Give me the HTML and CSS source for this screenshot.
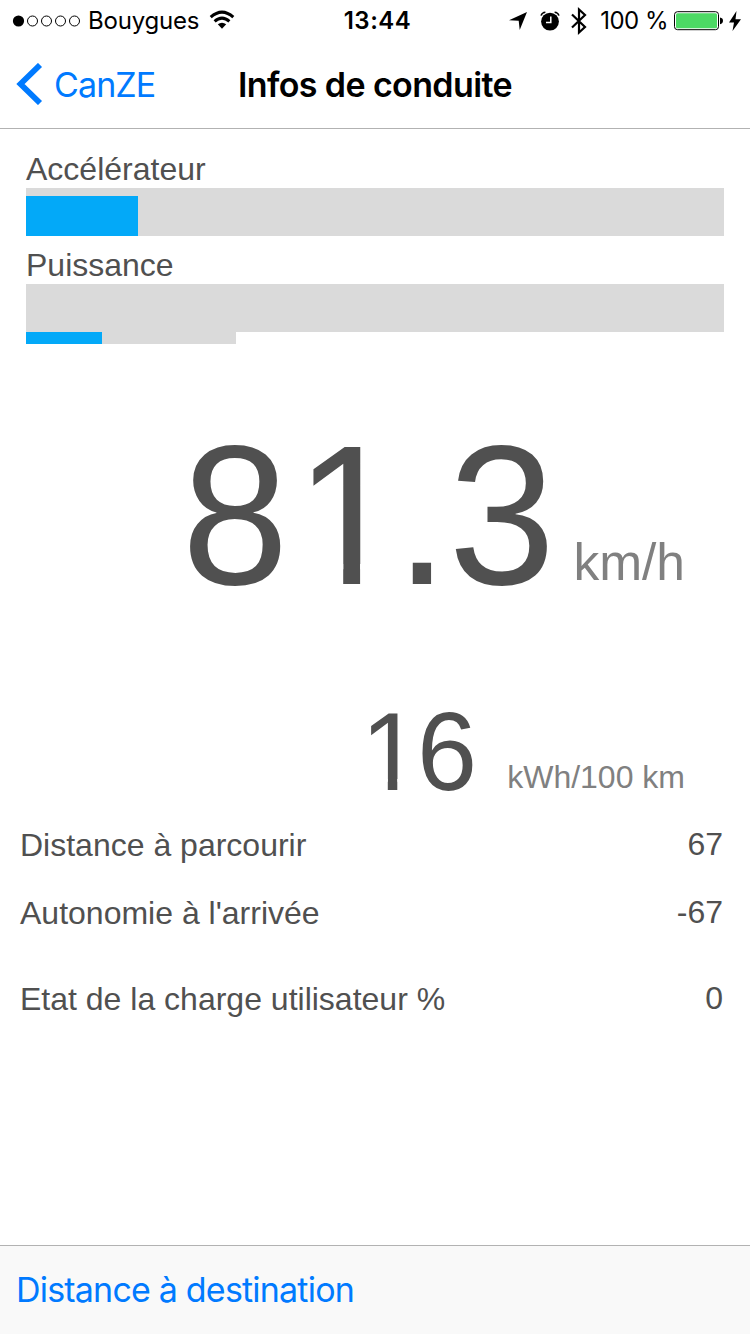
FILE: index.html
```html
<!DOCTYPE html>
<html lang="fr">
<head>
<meta charset="utf-8">
<title>Infos de conduite</title>
<link rel="stylesheet" href="styles.css">
</head>
<body>
<div class="screen">
  <header class="status">
    <div class="status-left">
      <svg class="signal" width="70" height="14" viewBox="0 0 70 14" fill="none" stroke="#000"><circle cx="6.5" cy="7" r="5.6" fill="#000" stroke="none"/><circle cx="20.5" cy="7" r="5"/><circle cx="34.5" cy="7" r="5"/><circle cx="48.5" cy="7" r="5"/><circle cx="62.5" cy="7" r="5"/></svg>
      <span class="carrier">Bouygues</span>
      <svg class="wifi" width="26" height="20" viewBox="0 0 26 20" fill="none" stroke="#000" stroke-width="3"><path d="M1.7 7.2Q13-3 24.3 7.2"/><path d="M5.6 11.4Q13 4.8 20.4 11.4"/><path d="M8.8 14.3Q13 11 17.2 14.3L13 18.8Z" fill="#000" stroke="none"/></svg>
    </div>
    <span class="time">13:44</span>
    <div class="status-right">
      <svg class="location" width="18" height="18" viewBox="0 0 18 18"><path d="M0 8.2L18 0L10.7 18L9.7 8.8Z"/></svg>
      <svg class="alarm" width="20" height="20" viewBox="0 0 20 20"><circle cx="10" cy="10.6" r="8.9"/><path d="M1 4.6Q2 1.5 5.4 1.2M14.6 1.2Q18 1.5 19 4.6" fill="none" stroke="#000" stroke-width="1.4"/><path d="M10.8 5.5V11.5H6" fill="none" stroke="#fff" stroke-width="1.5"/></svg>
      <svg class="bluetooth" width="16" height="28" viewBox="0 0 16 28" fill="none" stroke="#000" stroke-width="2.2"><path d="M1 7.5L14 20L8 25.5V2.5L14 8L1 20.5"/></svg>
      <span class="percent">100 %</span>
      <svg class="battery" width="49" height="20" viewBox="0 0 49 20"><rect x=".5" y=".7" width="44" height="18" rx="3" fill="#fff" stroke="#000"/><rect x="2" y="2.2" width="41" height="15" rx="1.5" fill="#4cd964"/><path d="M46 6.5Q49 7 49 9.8T46 13.2Z"/></svg>
      <svg class="bolt" width="12" height="20" viewBox="0 0 12 20"><path d="M7.5 0L0 11.5H5L3.5 20L12 8.2H6.5Z"/></svg>
    </div>
  </header>
  <nav class="nav">
    <a class="back"><svg width="27" height="42" viewBox="0 0 27 42"><path d="M24 2L4.5 21L24 40" fill="none" stroke="#007aff" stroke-width="5.8"/></svg><span>CanZE</span></a>
    <h1 class="title">Infos de conduite</h1>
  </nav>
  <main class="content">
    <section class="gauges">
      <div class="label">Accélérateur</div>
      <div class="track"><div class="fill"></div></div>
      <div class="label label-power">Puissance</div>
      <div class="track"></div>
      <div class="subtrack"><div class="subfill"></div></div>
    </section>
    <section class="reading speed"><span class="value">8<span class="one">1</span>.3</span><span class="unit">km/h</span></section>
    <section class="reading usage"><span class="value"><span class="one">1</span>6</span><span class="unit">kWh/100 km</span></section>
    <section class="rows">
      <div class="row"><span>Distance à parcourir</span><span class="number">67</span></div>
      <div class="row row-range"><span>Autonomie à l'arrivée</span><span class="number">-67</span></div>
      <div class="row"><span>Etat de la charge utilisateur %</span><span class="number">0</span></div>
    </section>
  </main>
  <footer class="toolbar"><a>Distance à destination</a></footer>
</div>
</body>
</html>
```
FILE: styles.css
```css
* { box-sizing: border-box; }
body { margin: 0; background: #fff; }
svg { display: block; flex: none; }
.screen { width: 750px; height: 1334px; display: flex; flex-direction: column; overflow: hidden; font-family: "Liberation Sans", Arial, sans-serif; color: #505050; }
.status { height: 40px; display: grid; grid-template-columns: 1fr auto 1fr; align-items: center; padding: 2px 9px 0 12px; font: 24px/38px Inter, sans-serif; color: #000; }
.status-left, .status-right { display: flex; align-items: center; }
.status-right { justify-content: flex-end; }
.carrier { margin-left: 6px; letter-spacing: -0.2px; }
.wifi { margin-left: 10px; margin-bottom: 2px; }
.time { font-weight: 600; letter-spacing: 0.5px; transform: translateX(1px); }
.alarm { margin-left: 13px; }
.bluetooth { margin-left: 11px; }
.percent { margin-left: 13px; letter-spacing: -0.5px; }
.battery { margin-left: 6px; }
.bolt { margin-left: 6px; }
.nav { height: 89px; border-bottom: 1px solid #b2b2b2; display: grid; grid-template-columns: 1fr auto 1fr; align-items: center; padding: 0 16px; font-family: Inter, sans-serif; }
.back { display: flex; align-items: center; gap: 11px; color: #007aff; font-size: 34px; letter-spacing: -0.9px; }
.title { margin: 0; color: #000; font-size: 34px; font-weight: 600; letter-spacing: -0.62px; }
.content { flex: 1; font-size: 32px; }
.gauges { padding: 22px 26px 0; }
.label { height: 37px; line-height: 37px; }
.label-power { margin-top: 11px; }
.track { height: 48px; background: #dadada; padding-top: 8px; }
.fill { width: 112px; height: 40px; background: #03a9f8; }
.subtrack { width: 210px; height: 12px; background: #dadada; }
.subfill { width: 76px; height: 12px; background: #03a9f8; }
.reading { display: flex; justify-content: flex-end; align-items: baseline; padding-right: 65px; }
.value { color: #505050; transform: scaleY(1.03); transform-origin: 50% 80.4%; }
/* Plain numeral one, without the foot */
.one { display: inline-block; line-height: 1.117; transform: translateX(0.034em); clip-path: polygon(0 0, 100% 0, 100% 0.8em, 0.339em 0.8em, 0.339em 100%, 0.251em 100%, 0.251em 0.8em, 0 0.8em); }
.unit { color: #808080; }
.speed { height: 284px; margin-top: 64px; line-height: 220px; }
.speed .value { font-size: 192px; }
.speed .unit { font-size: 51.5px; margin-left: 18px; transform: translateY(-4px); }
.usage { height: 135px; line-height: 122px; }
.usage .value { font-size: 108px; }
.usage .unit { font-size: 32px; margin-left: 30px; transform: translateY(-2px); }
.rows { padding: 0 27px 0 20px; }
.row { height: 68px; line-height: 37px; display: flex; justify-content: space-between; }
.row-range { height: 86px; }
.number { transform: translateY(-1px); }
.toolbar { height: 89px; border-top: 1px solid #b2b2b2; background: #f9f9f9; padding: 0 16px; font: 34px/88px Inter, sans-serif; letter-spacing: -0.8px; color: #007aff; }
```
